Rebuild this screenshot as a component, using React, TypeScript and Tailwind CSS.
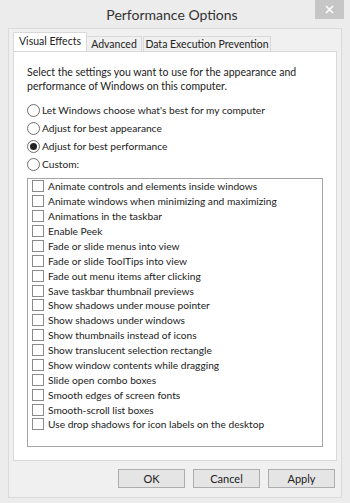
import React, { useState } from "react";

const effects = [
  "Animate controls and elements inside windows",
  "Animate windows when minimizing and maximizing",
  "Animations in the taskbar",
  "Enable Peek",
  "Fade or slide menus into view",
  "Fade or slide ToolTips into view",
  "Fade out menu items after clicking",
  "Save taskbar thumbnail previews",
  "Show shadows under mouse pointer",
  "Show shadows under windows",
  "Show thumbnails instead of icons",
  "Show translucent selection rectangle",
  "Show window contents while dragging",
  "Slide open combo boxes",
  "Smooth edges of screen fonts",
  "Smooth-scroll list boxes",
  "Use drop shadows for icon labels on the desktop",
];

const options = [
  "Let Windows choose what's best for my computer",
  "Adjust for best appearance",
  "Adjust for best performance",
  "Custom:",
];

const App = () => {
  const [choice, setChoice] = useState(2);
  const [checked, setChecked] = useState<boolean[]>(effects.map(() => false));

  const toggle = (i: number) => {
    const next = [...checked];
    next[i] = !next[i];
    setChecked(next);
  };

  return (
    <div
      className="w-[350px] h-[503px] bg-[#ececec] text-[#222] flex flex-col whitespace-nowrap"
      style={{ fontFamily: 'Lato, "Open Sans", sans-serif' }}
    >
      {/* Title bar */}
      <div className="h-[28px] flex items-start">
        <div className="flex-1 pl-[29px] pt-[5px] text-center text-[14px] leading-[20px] text-[#333]">
          Performance Options
        </div>
        <button className="w-[29px] h-[19px] mr-[6px] bg-[#c6c6c6] flex items-center justify-center">
          <svg width="9" height="9" viewBox="0 0 9 9">
            <path d="M1 1 L8 8 M8 1 L1 8" stroke="#fff" strokeWidth="1.6" />
          </svg>
        </button>
      </div>

      {/* Client area */}
      <div className="mx-[8px] h-[470px] border border-[#dadada] bg-[#f0f0f0] pt-[4px] pl-[4px] pr-[4px] flex flex-col">
        {/* Tabs */}
        <div className="flex items-end h-[18px] text-[10.5px] relative z-10">
          <div className="w-[74px] h-[19px] text-center bg-white border border-b-0 border-[#d9d9d9] leading-[17px]">
            Visual Effects
          </div>
          <div className="w-[55px] h-[15px] text-center bg-[#f0f0f0] border border-b-0 border-l-0 border-[#d9d9d9] leading-[14px]">
            Advanced
          </div>
          <div className="w-[128px] h-[15px] ml-[1px] text-center bg-[#f0f0f0] border border-b-0 border-[#d9d9d9] leading-[14px]">
            Data Execution Prevention
          </div>
        </div>

        {/* Panel */}
        <div className="h-[410px] bg-white border border-[#d9d9d9] px-[13px] pt-[13px] pb-[13px] flex flex-col text-[10.2px]">
          <p className="leading-[14px] text-[10.5px]">
            Select the settings you want to use for the appearance and
            <br />
            performance of Windows on this computer.
          </p>

          <div className="mt-[8px] flex flex-col text-[10.2px]">
            {options.map((label, i) => (
              <label
                key={label}
                className="h-[18px] flex items-center gap-[2px] cursor-default"
                onClick={() => setChoice(i)}
              >
                <span className="w-[13px] h-[13px] rounded-full border border-[#6e6e6e] bg-white flex items-center justify-center">
                  {choice === i && <span className="w-[7px] h-[7px] rounded-full bg-[#222]" />}
                </span>
                <span className="leading-[14px]">{label}</span>
              </label>
            ))}
          </div>

          <div className="mt-[5px] flex-1 border border-[#a5a5a5] bg-white pl-[4px] flex flex-col">
            {effects.map((label, i) => (
              <label
                key={label}
                className="h-[14.875px] flex items-center gap-[4px] cursor-default"
                onClick={() => toggle(i)}
              >
                <span className="w-[12px] h-[12px] border border-[#8a8a8a] bg-white flex items-center justify-center">
                  {checked[i] && (
                    <svg width="8" height="8" viewBox="0 0 8 8">
                      <path d="M1 4 L3 6 L7 1" stroke="#222" strokeWidth="1.4" fill="none" />
                    </svg>
                  )}
                </span>
                <span className="leading-[14px]">{label}</span>
              </label>
            ))}
          </div>
        </div>

        {/* Buttons */}
        <div className="mt-[8px] flex justify-end gap-[8px] pr-[2px] text-[11px]">
          {["OK", "Cancel", "Apply"].map((b) => (
            <button
              key={b}
              className="w-[67px] h-[19px] bg-[#e5e5e5] border border-[#adadad] leading-[16px]"
            >
              {b}
            </button>
          ))}
        </div>
      </div>
    </div>
  );
};

export default App;
